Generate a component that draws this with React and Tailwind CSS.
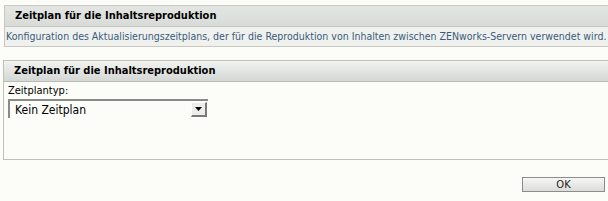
import React from 'react';

const font = { fontFamily: '"DejaVu Sans Condensed", "DejaVu Sans", Verdana, sans-serif' };

export default function App() {
  return (
    <div className="w-[608px] h-[201px] bg-[#fcfcf9] text-black overflow-hidden" style={font}>
      <div className="pt-[5px] pl-[4px]">
        <div className="border-t border-l border-b border-[#c8c8c0]">
          <div className="h-[20px] flex items-center pl-[10px] bg-gradient-to-b from-[#e4e6e3] to-[#d8dbd8] text-[11px] font-bold">
            Zeitplan für die Inhaltsreproduktion
          </div>
          <div className="h-[20px] flex items-center pl-[1px] bg-[#eff1ef] border-t border-[#c8c8c0] text-[10.5px] text-[#3c5a78] whitespace-nowrap">
            Konfiguration des Aktualisierungszeitplans, der für die Reproduktion von Inhalten zwischen ZENworks-Servern verwendet wird.
          </div>
        </div>
      </div>

      <div className="mt-[13px] ml-[3px] border-t border-l border-b border-[#c0c0b8] h-[100px] flex flex-col">
        <div className="h-[21px] flex items-center pl-[10px] bg-gradient-to-b from-[#f2f4f2] via-[#e2e5e2] to-[#d4d8d4] border-b border-[#b8bcb8] text-[11px] font-bold">
          Zeitplan für die Inhaltsreproduktion
        </div>
        <div className="pl-[4px] pt-[2px]">
          <div className="text-[11px] leading-[14px]">Zeitplantyp:</div>
          <div className="mt-[1px] w-[200px] h-[19px] flex items-center border-t-2 border-l-2 border-t-[#8a8a8a] border-l-[#8a8a8a] bg-[#fcfcf9]">
            <span className="flex-1 pl-[5px] text-[12px]">Kein Zeitplan</span>
            <span className="w-[16px] h-[15px] mr-[1px] flex items-center justify-center bg-[#ecece8] border-r-2 border-b-2 border-[#7a7a7a] border-t border-l border-t-white border-l-white">
              <svg width="8" height="5" viewBox="0 0 8 5"><path d="M0 0h7L3.5 4z" fill="#000" /></svg>
            </span>
          </div>
        </div>
      </div>

      <div className="flex justify-end pr-[3px] mt-[17px]">
        <button className="w-[83px] h-[15px] border border-[#8c8c8c] bg-gradient-to-b from-[#f6f6f4] to-[#dcdcd8] text-[11px] flex items-center justify-center leading-none text-[#222]">
          OK
        </button>
      </div>
    </div>
  );
}
